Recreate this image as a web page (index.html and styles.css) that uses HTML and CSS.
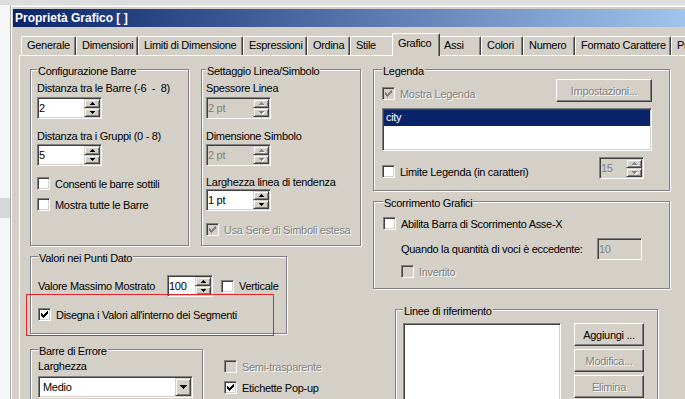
FILE: index.html
```html
<!DOCTYPE html>
<html lang="it">
<head>
<meta charset="utf-8">
<title>Proprietà Grafico [ ]</title>
<link rel="stylesheet" href="styles.css">
</head>
<body>
<div class="topstrip"></div>
<div class="desktop">
  <div class="backdrop"><div class="backdrop-band"></div></div>
  <div class="window">
    <div class="titlebar">Proprietà Grafico [ ]</div>
    <div class="dialog">
      <div class="tabs">
        <div class="tab">Generale</div>
        <div class="tab">Dimensioni</div>
        <div class="tab">Limiti di Dimensione</div>
        <div class="tab">Espressioni</div>
        <div class="tab">Ordina</div>
        <div class="tab">Stile</div>
        <div class="tab tab-active">Grafico</div>
        <div class="tab">Assi</div>
        <div class="tab">Colori</div>
        <div class="tab">Numero</div>
        <div class="tab">Formato Carattere</div>
        <div class="tab">Presentazione</div>
      </div>
      <div class="panel">
        <div class="col-left">
          <div class="row-top">
            <div class="group g-config">
              <div class="gb-title">Configurazione Barre</div>
              <div class="lbl mt3">Distanza tra le Barre (-6&nbsp;&nbsp;-&nbsp;&nbsp;8)</div>
              <div class="spin sunken w65 mt2"><span class="field-val">2</span><span class="spin-btns"><span class="sbtn"><svg class="arr" width="5" height="3" viewBox="0 0 5 3"><path d="M2 0h1v1h1v1h1v1H0V2h1V1h1z"/></svg></span><span class="sbtn"><svg class="arr" width="5" height="3" viewBox="0 0 5 3"><path d="M0 0h5v1H4v1H3v1H2V2H1V1H0z"/></svg></span></span></div>
              <div class="lbl mt10">Distanza tra i Gruppi (0 - 8)</div>
              <div class="spin sunken w65 mt1"><span class="field-val">5</span><span class="spin-btns"><span class="sbtn"><svg class="arr" width="5" height="3" viewBox="0 0 5 3"><path d="M2 0h1v1h1v1h1v1H0V2h1V1h1z"/></svg></span><span class="sbtn"><svg class="arr" width="5" height="3" viewBox="0 0 5 3"><path d="M0 0h5v1H4v1H3v1H2V2H1V1H0z"/></svg></span></span></div>
              <div class="check mt11"><span class="cb sunken-cb"></span><span>Consenti le barre sottili</span></div>
              <div class="check mt8"><span class="cb sunken-cb"></span><span>Mostra tutte le Barre</span></div>
            </div>
            <div class="group g-line">
              <div class="gb-title">Settaggio Linea/Simbolo</div>
              <div class="lbl mt3">Spessore Linea</div>
              <div class="spin sunken w65 mt2 is-disabled"><span class="field-val">2 pt</span><span class="spin-btns"><span class="sbtn"><svg class="arr" width="5" height="3" viewBox="0 0 5 3"><path d="M2 0h1v1h1v1h1v1H0V2h1V1h1z"/></svg></span><span class="sbtn"><svg class="arr" width="5" height="3" viewBox="0 0 5 3"><path d="M0 0h5v1H4v1H3v1H2V2H1V1H0z"/></svg></span></span></div>
              <div class="lbl mt10">Dimensione Simbolo</div>
              <div class="spin sunken w65 mt1 is-disabled"><span class="field-val">2 pt</span><span class="spin-btns"><span class="sbtn"><svg class="arr" width="5" height="3" viewBox="0 0 5 3"><path d="M2 0h1v1h1v1h1v1H0V2h1V1h1z"/></svg></span><span class="sbtn"><svg class="arr" width="5" height="3" viewBox="0 0 5 3"><path d="M0 0h5v1H4v1H3v1H2V2H1V1H0z"/></svg></span></span></div>
              <div class="lbl mt9">Larghezza linea di tendenza</div>
              <div class="spin sunken w65 mt0"><span class="field-val">1 pt</span><span class="spin-btns"><span class="sbtn"><svg class="arr" width="5" height="3" viewBox="0 0 5 3"><path d="M2 0h1v1h1v1h1v1H0V2h1V1h1z"/></svg></span><span class="sbtn"><svg class="arr" width="5" height="3" viewBox="0 0 5 3"><path d="M0 0h5v1H4v1H3v1H2V2H1V1H0z"/></svg></span></span></div>
              <div class="check mt12 is-disabled"><span class="cb sunken-cb"><svg class="tick" width="11" height="11" viewBox="0 0 11 11"><path d="M8 2h1v1H8zM7 3h2v1H7zM2 4h1v1H2zM6 4h3v1H6zM2 5h2v1H2zM5 5h3v1H5zM2 6h5v1H2zM3 7h3v1H3zM4 8h1v1H4z"/></svg></span><span class="dis-text">Usa Serie di Simboli estesa</span></div>
            </div>
          </div>

          <div class="group g-values">
            <div class="gb-title">Valori nei Punti Dato</div>
            <div class="vrow mt10">
              <span class="lbl lbl-max">Valore Massimo Mostrato</span>
              <div class="spin sunken w46"><span class="field-val">100</span><span class="spin-btns"><span class="sbtn"><svg class="arr" width="5" height="3" viewBox="0 0 5 3"><path d="M2 0h1v1h1v1h1v1H0V2h1V1h1z"/></svg></span><span class="sbtn"><svg class="arr" width="5" height="3" viewBox="0 0 5 3"><path d="M0 0h5v1H4v1H3v1H2V2H1V1H0z"/></svg></span></span></div>
              <div class="check ml8"><span class="cb sunken-cb"></span><span>Verticale</span></div>
            </div>
            <div class="check mt11"><span class="cb sunken-cb"><svg class="tick" width="11" height="11" viewBox="0 0 11 11"><path d="M8 2h1v1H8zM7 3h2v1H7zM2 4h1v1H2zM6 4h3v1H6zM2 5h2v1H2zM5 5h3v1H5zM2 6h5v1H2zM3 7h3v1H3zM4 8h1v1H4z"/></svg></span><span>Disegna i Valori all'interno dei Segmenti</span></div>
            <div class="highlight"></div>
          </div>

          <div class="row-bottom">
            <div class="group g-errors">
              <div class="gb-title">Barre di Errore</div>
              <div class="lbl mt1">Larghezza</div>
              <div class="combo sunken mt3"><span class="combo-val">Medio</span><span class="combo-btn"><svg class="arr" width="7" height="4" viewBox="0 0 7 4"><path d="M0 0h7v1H6v1H5v1H4v1H3V3H2V2H1V1H0z"/></svg></span></div>
            </div>
            <div class="side-checks">
              <div class="check is-disabled"><span class="cb sunken-cb"></span><span class="dis-text">Semi-trasparente</span></div>
              <div class="check"><span class="cb sunken-cb"><svg class="tick" width="11" height="11" viewBox="0 0 11 11"><path d="M8 2h1v1H8zM7 3h2v1H7zM2 4h1v1H2zM6 4h3v1H6zM2 5h2v1H2zM5 5h3v1H5zM2 6h5v1H2zM3 7h3v1H3zM4 8h1v1H4z"/></svg></span><span>Etichette Pop-up</span></div>
            </div>
          </div>
        </div>

        <div class="col-right">
          <div class="group g-legend">
            <div class="gb-title">Legenda</div>
            <div class="lg-row mt1">
              <div class="check mt8 is-disabled"><span class="cb sunken-cb"><svg class="tick" width="11" height="11" viewBox="0 0 11 11"><path d="M8 2h1v1H8zM7 3h2v1H7zM2 4h1v1H2zM6 4h3v1H6zM2 5h2v1H2zM5 5h3v1H5zM2 6h5v1H2zM3 7h3v1H3zM4 8h1v1H4z"/></svg></span><span class="dis-text">Mostra Legenda</span></div>
              <div class="btn w96 is-disabled"><span class="dis-text">Impostazioni...</span></div>
            </div>
            <div class="listbox sunken lb-legend mt6">
              <div class="lb-sel">city</div>
            </div>
            <div class="lg-row mt6">
              <div class="check mt8"><span class="cb sunken-cb"></span><span>Limite Legenda (in caratteri)</span></div>
              <div class="spin sunken w45 mr8 is-disabled"><span class="field-val">15</span><span class="spin-btns"><span class="sbtn"><svg class="arr" width="5" height="3" viewBox="0 0 5 3"><path d="M2 0h1v1h1v1h1v1H0V2h1V1h1z"/></svg></span><span class="sbtn"><svg class="arr" width="5" height="3" viewBox="0 0 5 3"><path d="M0 0h5v1H4v1H3v1H2V2H1V1H0z"/></svg></span></span></div>
            </div>
          </div>

          <div class="group g-scroll">
            <div class="gb-title">Scorrimento Grafici</div>
            <div class="check mt7"><span class="cb sunken-cb"></span><span>Abilita Barra di Scorrimento Asse-X</span></div>
            <div class="sc-row mt8">
              <span class="lbl">Quando la quantità di voci è eccedente:</span>
              <div class="field sunken w45 is-disabled">10</div>
            </div>
            <div class="check mt5 ml18 is-disabled"><span class="cb sunken-cb"></span><span class="dis-text">Invertito</span></div>
          </div>

          <div class="group g-lines">
            <div class="gb-title">Linee di riferimento</div>
            <div class="ln-row">
              <div class="listbox sunken lb-lines"></div>
              <div class="btn-col">
                <div class="btn w70">Aggiungi ...</div>
                <div class="btn w70 is-disabled"><span class="dis-text">Modifica...</span></div>
                <div class="btn w70 is-disabled"><span class="dis-text">Elimina</span></div>
              </div>
            </div>
          </div>
        </div>
      </div>
    </div>
  </div>
</div>
</body>
</html>
```

FILE: styles.css
```css
* { box-sizing: border-box; }

html, body { margin: 0; padding: 0; }

body {
  width: 685px;
  height: 399px;
  overflow: hidden;
  background: #f6f6f6;
  font-family: "Liberation Sans", Arial, sans-serif;
  font-size: 11px;
  letter-spacing: -0.3px;
  color: #000;
}

.topstrip { height: 5px; background: #dcdcdc; }

.desktop { display: flex; }

.backdrop { flex: none; width: 10px; padding-top: 193px; }
.backdrop-band { height: 20px; background: #d7d7d7; }

.window {
  flex: none;
  width: 700px;
  height: 420px;
  background: #d4d0c8;
  border-left: 1px solid #a8a8a8;
  border-top: 1px solid #ececec;
  box-shadow: inset 1px 1px 0 #fff;
  padding: 3px 0 0 2px;
}

.titlebar {
  height: 18px;
  line-height: 18px;
  padding-left: 2px;
  color: #fff;
  font-weight: bold;
  font-size: 12px;
  letter-spacing: 0;
  white-space: nowrap;
  background: linear-gradient(to right, #0a246a, #a6caf0);
}

.dialog { padding: 6px 0 0 6px; }

/* tabs */
.tabs {
  display: flex;
  align-items: flex-end;
  height: 22px;
  padding-left: 2px;
}
.tab {
  flex: none;
  height: 19px;
  padding: 1px 0 0 5px;
  line-height: 14px;
  white-space: nowrap;
  overflow: hidden;
  border-top: 1px solid #fff;
  border-left: 1px solid #fff;
  border-right: 1px solid #404040;
  border-radius: 2px 2px 0 0;
  box-shadow: inset -1px 0 0 #808080;
}
.tab:nth-child(1) { width: 55px; }
.tab:nth-child(2) { width: 62px; }
.tab:nth-child(3) { width: 105px; }
.tab:nth-child(4) { width: 64px; }
.tab:nth-child(5) { width: 43px; }
.tab:nth-child(6) { width: 44px; }
.tab:nth-child(7) { width: 48px; }
.tab:nth-child(8) { width: 43px; }
.tab:nth-child(9) { width: 42px; }
.tab:nth-child(10) { width: 52px; }
.tab:nth-child(11) { width: 96px; }
.tab:nth-child(12) { width: 60px; }
.tab-active {
  height: 23px;
  margin: 0 -2px -1px;
  padding-top: 2px;
  position: relative;
  z-index: 1;
  background: #d4d0c8;
}

/* panel */
.panel {
  display: flex;
  align-items: flex-start;
  height: 400px;
  padding-left: 10px;
  border-top: 1px solid #fff;
  border-left: 1px solid #fff;
}
.col-left { flex: none; width: 331px; }
.col-right { flex: none; width: 297px; margin-left: 12px; }

/* group boxes */
.group {
  border: 1px solid #808080;
  box-shadow: inset 1px 1px 0 #fff, 1px 1px 0 #fff;
}
.gb-title {
  width: fit-content;
  height: 13px;
  margin-top: -5px;
  padding: 0 1px;
  line-height: 13px;
  white-space: nowrap;
  background: #d4d0c8;
}

.row-top { display: flex; margin-top: 13px; }
.g-config { width: 159px; height: 177px; padding: 0 6px; }
.g-line { width: 160px; height: 177px; margin-left: 12px; padding: 0 4px; }

.g-values {
  position: relative;
  width: 257px;
  height: 78px;
  margin-top: 10px;
  padding: 0 7px;
}
.vrow { display: flex; align-items: center; height: 22px; }
.lbl-max { flex: none; width: 129px; }

.highlight {
  position: absolute;
  left: -5px;
  top: 37px;
  width: 248px;
  height: 42px;
  border: 1px solid #e3262b;
}

.row-bottom { display: flex; margin-top: 15px; }
.g-errors { flex: none; width: 173px; height: 80px; padding: 0 8px 0 7px; }
.side-checks {
  display: flex;
  flex-direction: column;
  gap: 8px;
  margin: 11px 0 0 21px;
}

.g-legend { margin-top: 13px; height: 122px; padding: 0 17px 0 8px; }
.lg-row { display: flex; justify-content: space-between; align-items: flex-start; }
.lb-legend { height: 43px; }
.lb-sel {
  height: 16px;
  padding: 0 0 2px 2px;
  line-height: 14px;
  color: #fff;
  background: #0a246a;
}

.g-scroll { margin-top: 10px; height: 88px; padding: 0 17px 0 9px; }
.sc-row { display: flex; align-items: center; height: 22px; padding-left: 18px; }
.sc-row .field { margin-left: auto; margin-right: 10px; }

.g-lines { margin: 20px 0 0 22px; width: 263px; height: 100px; padding: 0 7px; }
.ln-row { display: flex; gap: 13px; margin-top: 5px; }
.lb-lines { flex: none; width: 158px; height: 80px; }
.btn-col { display: flex; flex-direction: column; gap: 3px; }

/* controls */
.lbl { height: 14px; line-height: 14px; white-space: nowrap; }

.sunken {
  border: 1px solid;
  border-color: #808080 #fff #fff #808080;
  box-shadow: inset 1px 1px 0 #404040, inset -1px -1px 0 #d4d0c8;
  padding: 1px;
}

.spin { display: flex; height: 22px; background: #fff; }
.field { height: 22px; line-height: 18px; background: #fff; white-space: nowrap; }
.field-val { flex: 1; min-width: 0; line-height: 18px; white-space: nowrap; overflow: hidden; }
.spin-btns { flex: none; width: 16px; display: flex; flex-direction: column; }
.sbtn {
  flex: 1;
  display: flex;
  align-items: center;
  justify-content: center;
  background: #d4d0c8;
  border: 1px solid;
  border-color: #d4d0c8 #404040 #404040 #d4d0c8;
  box-shadow: inset 1px 1px 0 #fff, inset -1px -1px 0 #808080;
}
.arr { display: block; fill: #000; }
.is-disabled .arr { fill: #808080; filter: drop-shadow(1px 1px 0 #fff); }

.spin.is-disabled, .field.is-disabled { background: #d4d0c8; color: #808080; }

.combo { display: flex; width: 155px; height: 22px; background: #fff; }
.combo-val { flex: 1; line-height: 18px; padding-left: 3px; }
.combo-btn {
  flex: none;
  width: 16px;
  display: flex;
  align-items: center;
  justify-content: center;
  background: #d4d0c8;
  border: 1px solid;
  border-color: #d4d0c8 #404040 #404040 #d4d0c8;
  box-shadow: inset 1px 1px 0 #fff, inset -1px -1px 0 #808080;
}

.listbox { background: #fff; }

.btn {
  flex: none;
  height: 23px;
  display: flex;
  align-items: center;
  justify-content: center;
  white-space: nowrap;
  background: #d4d0c8;
  border: 1px solid;
  border-color: #fff #404040 #404040 #fff;
  box-shadow: inset -1px -1px 0 #808080;
}

.check {
  display: flex;
  align-items: center;
  gap: 5px;
  height: 13px;
  line-height: 14px;
  white-space: nowrap;
}
.cb {
  flex: none;
  width: 13px;
  height: 13px;
  background: #fff;
}
.sunken-cb {
  border: 1px solid;
  border-color: #808080 #fff #fff #808080;
  box-shadow: inset 1px 1px 0 #404040, inset -1px -1px 0 #d4d0c8;
}
.tick { display: block; fill: #000; shape-rendering: crispEdges; }
.is-disabled .cb { background: #d4d0c8; }
.is-disabled .tick { fill: #808080; }

.dis-text { color: #808080; text-shadow: 1px 1px 0 #fff; }

/* sizes & spacing */
.w45 { width: 45px; flex: none; }
.w46 { width: 46px; flex: none; }
.w65 { width: 65px; }
.w70 { width: 70px; }
.w96 { width: 96px; }

.mt0 { margin-top: 0; }
.mt1 { margin-top: 1px; }
.mt2 { margin-top: 2px; }
.mt3 { margin-top: 3px; }
.mt5 { margin-top: 5px; }
.mt6 { margin-top: 6px; }
.mt7 { margin-top: 7px; }
.mt8 { margin-top: 8px; }
.mt9 { margin-top: 9px; }
.mt10 { margin-top: 10px; }
.mt11 { margin-top: 11px; }
.mt12 { margin-top: 12px; }
.ml8 { margin-left: 8px; }
.ml18 { margin-left: 18px; }
.mr8 { margin-right: 8px; }
```
